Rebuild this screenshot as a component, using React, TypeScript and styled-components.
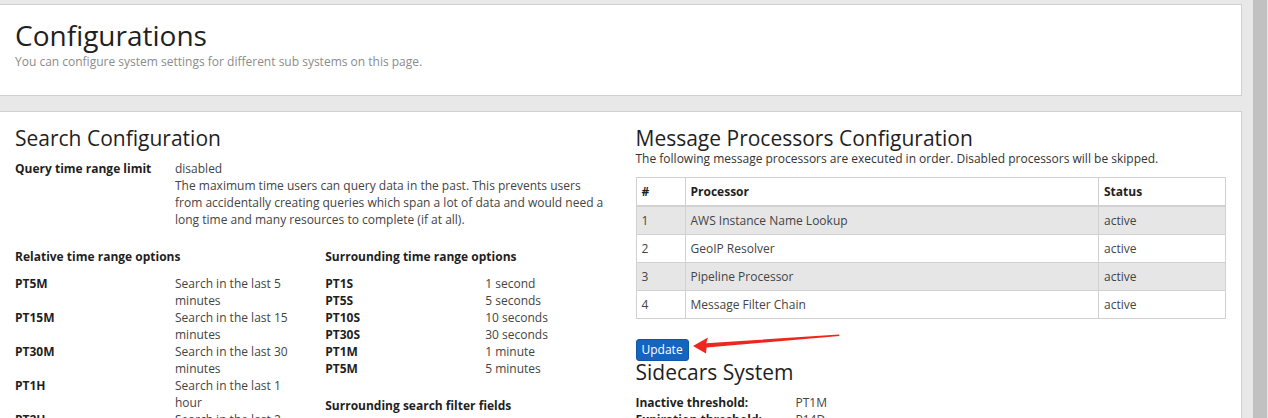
import styled, { createGlobalStyle } from "styled-components";

const GlobalStyle = createGlobalStyle`
  html, body {
    margin: 0;
    height: 418px;
    overflow: hidden;
    background: #e8e8e8;
  }
  body {
    font-family: "Open Sans", "DejaVu Sans", sans-serif;
    font-size: 12px;
    line-height: 17px;
    color: #333;
  }
`;

const relativeOptions = [
  ["PT5M", "Search in the last 5 minutes"],
  ["PT15M", "Search in the last 15 minutes"],
  ["PT30M", "Search in the last 30 minutes"],
  ["PT1H", "Search in the last 1 hour"],
  ["PT2H", "Search in the last 2 hours"],
  ["PT8H", "Search in the last 8 hours"],
  ["P1D", "Search in the last 1 day"],
];

const surroundingOptions = [
  ["PT1S", "1 second"],
  ["PT5S", "5 seconds"],
  ["PT10S", "10 seconds"],
  ["PT30S", "30 seconds"],
  ["PT1M", "1 minute"],
  ["PT5M", "5 minutes"],
];

const filterFields = ["file", "source", "gl2_source_input", "source_file"];

const processors = [
  "AWS Instance Name Lookup",
  "GeoIP Resolver",
  "Pipeline Processor",
  "Message Filter Chain",
];

const sidecars = [
  ["Inactive threshold:", "PT1M"],
  ["Expiration threshold:", "P14D"],
  ["Update interval:", "PT30S"],
  ["Send status:", "yes"],
];

export default function App() {
  return (
    <>
      <GlobalStyle />
      <Shell>
        <Main>
          <Panel $pad="15px 15px 25px">
            <PageTitle>Configurations</PageTitle>
            <PageLead>You can configure system settings for different sub systems on this page.</PageLead>
          </Panel>

          <Panel $pad="15px 15px 30px">
            <Columns>
              <section>
                <SectionTitle>Search Configuration</SectionTitle>
                <DefList $top={10}>
                  <dt>Query time range limit</dt>
                  <dd>
                    disabled
                    <br />
                    The maximum time users can query data in the past. This prevents users
                    from accidentally creating queries which span a lot of data and would need a
                    long time and many resources to complete (if at all).
                  </dd>
                </DefList>

                <Columns>
                  <div>
                    <SubTitle>Relative time range options</SubTitle>
                    <DefList>
                      {relativeOptions.map(([k, v]) => (
                        <Pair key={k} k={k} v={v} />
                      ))}
                    </DefList>
                  </div>
                  <div>
                    <SubTitle>Surrounding time range options</SubTitle>
                    <DefList>
                      {surroundingOptions.map(([k, v]) => (
                        <Pair key={k} k={k} v={v} />
                      ))}
                    </DefList>
                    <SubTitle>Surrounding search filter fields</SubTitle>
                    <FieldList>
                      {filterFields.map((f) => (
                        <li key={f}>{f}</li>
                      ))}
                    </FieldList>
                  </div>
                </Columns>
              </section>

              <section>
                <SectionTitle>Message Processors Configuration</SectionTitle>
                <Lead>The following message processors are executed in order. Disabled processors will be skipped.</Lead>
                <ProcTable>
                  <thead>
                    <tr>
                      <th style={{ width: 38 }}>#</th>
                      <th>Processor</th>
                      <th style={{ width: 116 }}>Status</th>
                    </tr>
                  </thead>
                  <tbody>
                    {processors.map((p, i) => (
                      <tr key={p}>
                        <td>{i + 1}</td>
                        <td>{p}</td>
                        <td>active</td>
                      </tr>
                    ))}
                  </tbody>
                </ProcTable>

                <ButtonRow>
                  <UpdateButton type="button">Update</UpdateButton>
                  <Arrow width="152" height="26" viewBox="0 0 152 26">
                    <path d="M3 16 L18 7.5 L16.2 13.2 L149 4.6 L149.4 6 L16.6 17.4 L16 23.5 Z" fill="#f0261e" />
                  </Arrow>
                </ButtonRow>

                <SectionTitle>Sidecars System</SectionTitle>
                <DefList $top={10}>
                  {sidecars.map(([k, v]) => (
                    <Pair key={k} k={k} v={v} />
                  ))}
                </DefList>
              </section>
            </Columns>
          </Panel>
        </Main>
        <ScrollTrack />
      </Shell>
    </>
  );
}

const Pair = ({ k, v }: { k: string; v: string }) => (
  <>
    <dt>{k}</dt>
    <dd>{v}</dd>
  </>
);

const Shell = styled.div`
  display: flex;
  height: 418px;
`;

const Main = styled.main`
  flex: 1;
  min-width: 0;
  padding: 4px 11px 0 0;
  margin-left: -1px;
`;

const ScrollTrack = styled.div`
  width: 14px;
  margin-right: 1px;
  background: #c1c1c1;
`;

const Panel = styled.div<{ $pad: string }>`
  background: #fff;
  border: 1px solid #d1d1d1;
  padding: ${(p) => p.$pad};
  margin-bottom: 15px;
`;

const PageTitle = styled.h1`
  margin: 0;
  font-size: 28px;
  line-height: 31px;
  font-weight: 400;
  color: #1f1f1f;
`;

const PageLead = styled.p`
  margin: 2px 0 0;
  color: #8c8c8c;
`;

const Columns = styled.div`
  display: grid;
  grid-template-columns: 1fr 1fr;
  column-gap: 30px;
  align-items: start;
`;

const SectionTitle = styled.h2`
  margin: 0;
  font-size: 21px;
  line-height: 23px;
  font-weight: 400;
  color: #1f1f1f;
`;

const Lead = styled.p`
  margin: 0;
`;

const SubTitle = styled.h3`
  margin: 20px 0 10px;
  font-size: 12px;
  line-height: 17px;
  font-weight: 700;
  color: #1f1f1f;
`;

const DefList = styled.dl<{ $top?: number }>`
  display: grid;
  grid-template-columns: 160px 1fr;
  margin: ${(p) => p.$top ?? 0}px 0 0;

  dt {
    font-weight: 700;
    color: #1f1f1f;
  }

  dd {
    margin: 0;
    color: #444;
  }
`;

const FieldList = styled.ul`
  margin: 0;
  padding-left: 20px;
  color: #444;
`;

const ProcTable = styled.table`
  width: 100%;
  margin: 10px 0 20px;
  border-collapse: collapse;
  border: 1px solid #d1d1d1;

  th,
  td {
    padding: 5px;
    border: 1px solid #d1d1d1;
    text-align: left;
    color: #444;
  }

  th {
    font-weight: 700;
    color: #1f1f1f;
    border-bottom-width: 2px;
  }

  tbody tr:nth-child(odd) {
    background: #e6e6e6;
  }
`;

const ButtonRow = styled.div`
  position: relative;
  display: flex;
`;

const UpdateButton = styled.button`
  font: inherit;
  font-size: 12px;
  line-height: 18px;
  padding: 1px 5px;
  color: #fff;
  background: #1565c0;
  border: 1px solid #0f56a6;
  border-radius: 3px;
  cursor: pointer;
`;

const Arrow = styled.svg`
  position: absolute;
  left: 54px;
  top: -9px;
  pointer-events: none;
`;
